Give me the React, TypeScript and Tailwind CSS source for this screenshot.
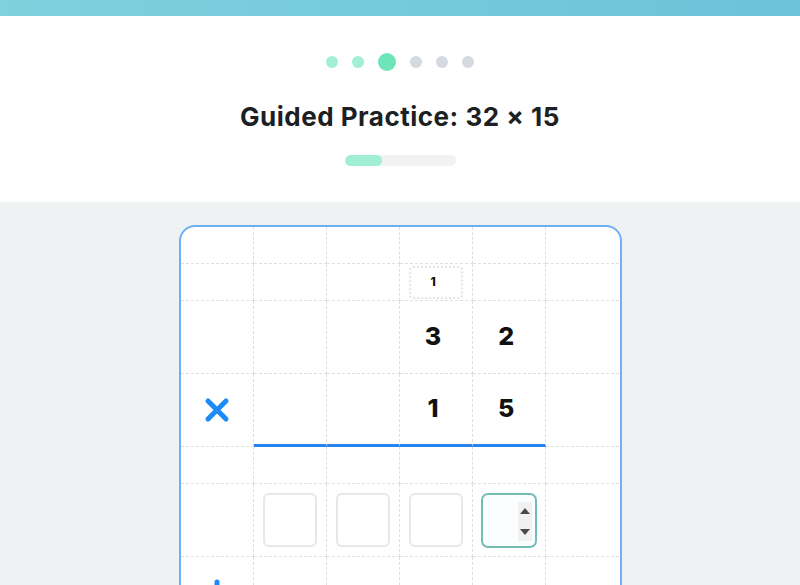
import type { ReactNode } from 'react'

const ROWS = [37, 37, 73, 73, 37, 73, 73]

function Dots() {
  return (
    <div className="flex items-center justify-center gap-[14px]">
      <span className="w-3 h-3 rounded-full bg-[#a3efd4]" />
      <span className="w-3 h-3 rounded-full bg-[#a3efd4]" />
      <span className="w-[18px] h-[18px] rounded-full bg-[#6ee5b8]" />
      <span className="w-3 h-3 rounded-full bg-[#d5dae1]" />
      <span className="w-3 h-3 rounded-full bg-[#d5dae1]" />
      <span className="w-3 h-3 rounded-full bg-[#d5dae1]" />
    </div>
  )
}

function Times() {
  return (
    <svg width="28" height="28" viewBox="0 0 28 28">
      <path d="M5 5 L23 23 M23 5 L5 23" stroke="#1d8bf6" strokeWidth="5" strokeLinecap="round" />
    </svg>
  )
}

function Plus() {
  return (
    <svg width="30" height="30" viewBox="0 0 30 30">
      <path d="M15 3 L15 27 M3 15 L27 15" stroke="#1d8bf6" strokeWidth="5" strokeLinecap="round" />
    </svg>
  )
}

function Digit({ children }: { children: ReactNode }) {
  return <span className="pr-[6px] text-[25px] font-extrabold text-[#111]">{children}</span>
}

function AnswerBox({ active }: { active?: boolean }) {
  if (active) {
    return (
      <div className="relative w-[56px] h-[55px] rounded-[7px] border-2 border-[#74bdb4] bg-[#fbfefe]">
        {/* spinner of the focused number input */}
        <div className="absolute right-[3px] top-[7px] w-[14px] h-[39px] bg-[#f1f1f1] flex flex-col items-center justify-between py-[6px]">
          <span className="w-0 h-0 border-l-[5px] border-r-[5px] border-b-[6px] border-l-transparent border-r-transparent border-b-[#4a4a4a]" />
          <span className="w-0 h-0 border-l-[5px] border-r-[5px] border-t-[6px] border-l-transparent border-r-transparent border-t-[#4a4a4a]" />
        </div>
      </div>
    )
  }
  return <div className="w-[54px] h-[54px] rounded-[6px] border-2 border-[#e6e7e9] bg-white" />
}

function cellContent(r: number, c: number): ReactNode {
  if (r === 1 && c === 3)
    return (
      <div className="w-[54px] h-[33px] rounded-[4px] border-2 border-dotted border-[#e2e4e6] flex items-center justify-center">
        <span className="pr-[6px] text-[12px] font-extrabold text-[#111]">1</span>
      </div>
    )
  if (r === 2 && c === 3) return <Digit>3</Digit>
  if (r === 2 && c === 4) return <Digit>2</Digit>
  if (r === 3 && c === 0) return <Times />
  if (r === 3 && c === 3) return <Digit>1</Digit>
  if (r === 3 && c === 4) return <Digit>5</Digit>
  if (r === 5 && c >= 1 && c <= 4) return <AnswerBox active={c === 4} />
  if (r === 6 && c === 0) return <Plus />
  return null
}

export default function App() {
  return (
    <div className="h-[585px] overflow-hidden bg-[#eef2f3]" style={{ fontFamily: 'Inter, "Liberation Sans", sans-serif' }}>
      <div className="h-4 bg-gradient-to-r from-[#7ed1dd] to-[#6cc2d9] shadow-[0_1px_3px_rgba(0,0,0,0.12)]" />
      <header className="bg-white pt-[37px] pb-[36px] flex flex-col items-center">
        <Dots />
        <h1 className="mt-[30px] text-[26px] leading-8 font-bold text-[#1c1f23] tracking-[0.5px]">
          Guided Practice: 32 × 15
        </h1>
        <div className="mt-[22px] w-[111px] h-[11px] rounded-full bg-[#f0f2f4] overflow-hidden">
          <div className="h-full w-[37px] rounded-full bg-[#a0efd3]" />
        </div>
      </header>

      <div className="mt-[23px] mx-auto w-[443px] rounded-[16px] border-2 border-[#6db0f4] bg-white overflow-hidden">
        {ROWS.map((h, r) => (
          <div key={r} className="grid grid-cols-6" style={{ height: h }}>
            {[0, 1, 2, 3, 4, 5].map(c => (
              <div
                key={c}
                className={
                  'flex items-center justify-center border-dashed border-[#dde0e3] ' +
                  (c < 5 ? 'border-r ' : '') +
                  (r === 3 && c >= 1 && c <= 4
                    ? 'border-b-[3px] [border-bottom-style:solid] border-b-[#2584ee]'
                    : r < ROWS.length - 1
                      ? 'border-b'
                      : '')
                }
              >
                {cellContent(r, c)}
              </div>
            ))}
          </div>
        ))}
      </div>
    </div>
  )
}
